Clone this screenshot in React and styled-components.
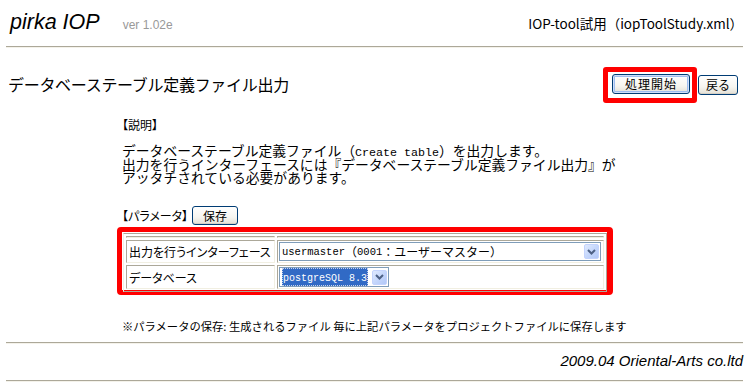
import React from 'react';
import styled, { createGlobalStyle } from 'styled-components';

const GlobalStyle = createGlobalStyle`
  html, body {
    margin: 0;
    padding: 0;
    background: #ffffff;
  }
  body {
    font-family: "Noto Sans CJK JP", "Liberation Sans", sans-serif;
    color: #000;
  }
`;

const Page = styled.div`
  width: 751px;
  box-sizing: border-box;
  padding: 0 8px 0 6px;
`;

const Header = styled.div`
  display: flex;
  justify-content: space-between;
  align-items: baseline;
  height: 46px;
  box-sizing: border-box;
  padding: 12px 0 0 4px;
`;

const Brand = styled.div`
  display: flex;
  align-items: baseline;
  gap: 23px;
`;

const Logo = styled.span`
  font-family: "Liberation Sans", Arial, sans-serif;
  font-style: italic;
  font-size: 21.5px;
  line-height: 21px;
  color: #000;
`;

const Version = styled.span`
  font-family: "Liberation Sans", Arial, sans-serif;
  font-size: 12px;
  color: #999999;
`;

const ProjectName = styled.span`
  font-size: 13.5px;
  color: #000;
`;

const Rule = styled.div`
  height: 0;
  border-top: 1px solid #aca899;
  border-bottom: 1px solid #f4f2ea;
  margin-top: ${(p) => p.$top || 0}px;
`;

const TitleRow = styled.div`
  display: flex;
  justify-content: space-between;
  align-items: center;
  height: 36px;
  margin-top: 19px;
  padding-left: 2px;
`;

const Title = styled.h1`
  margin: 0 0 3px 0;
  font-size: 16px;
  font-weight: normal;
  letter-spacing: -0.3px;
  line-height: 20px;
`;

const ButtonBar = styled.div`
  display: flex;
  align-items: center;
  margin-right: 5px;
`;

const Highlight = styled.div`
  border: 5px solid #ff0000;
  border-radius: 3px;
  padding: 2px 2px 4px 4px;
  display: flex;
`;

const Button = styled.button`
  height: ${(p) => p.$h || 20}px;
  width: ${(p) => p.$w}px;
  margin: 0 0 0 ${(p) => p.$gap || 0}px;
  padding: 0;
  font-family: "Noto Sans CJK JP", sans-serif;
  font-size: 12px;
  line-height: 1;
  letter-spacing: ${(p) => (p.$spaced ? '1px' : '0')};
  color: #000;
  border: 1px solid #003c74;
  border-radius: 3px;
  background: linear-gradient(#ffffff 0%, #f6f5f0 60%, #e3e0d6 100%);
  box-shadow: ${(p) =>
    p.$focus ? 'inset 0 0 0 1px #cfdff9, inset 0 0 0 2px #9ebdf0' : 'inset 0 -1px 0 #d6d0c5'};
`;

const Content = styled.div`
  padding-left: 116px;
`;

const SectionLabel = styled.div`
  font-size: 12px;
  line-height: 14px;
  font-feature-settings: "palt";
  margin-top: ${(p) => p.$top || 0}px;
`;

const Description = styled.div`
  margin-top: 12px;
  font-size: 13.8px;
`;

const DescLine = styled.div`
  height: 13.7px;
  line-height: 13.7px;
  white-space: nowrap;
`;

const Mono = styled.span`
  font-family: "Liberation Mono", monospace;
  font-size: ${(p) => p.$size || 11.67}px;
`;

const ParamRow = styled.div`
  display: flex;
  align-items: center;
  gap: 4px;
  margin-top: 21px;
  height: 19px;
`;

const Frame = styled.div`
  margin-top: 2px;
  margin-left: -5px;
  width: 496px;
  box-sizing: border-box;
  border: 5px solid #ff0000;
  border-right-width: 6px;
  border-radius: 4px;
  padding: 1px 0 0 1px;
  height: 68px;
`;

const Table = styled.table`
  width: 484px;
  border-collapse: separate;
  border-spacing: 2px;
  border: 1px solid;
  border-color: #aca899 #aca899 #aca899 #f1efe2;
`;

const Cell = styled.td`
  border: 1px solid;
  border-color: #aca899 #f1efe2 #f1efe2 #aca899;
  padding: ${(p) => (p.$spacer ? '0' : '1px')};
  height: ${(p) => (p.$spacer ? '0' : 'auto')};
  width: ${(p) => (p.$w ? `${p.$w}px` : 'auto')};
  box-sizing: border-box;
  vertical-align: middle;
`;

const LabelCell = styled(Cell)`
  font-size: 12px;
  font-feature-settings: "palt";
  padding-left: 2px;
  white-space: nowrap;
`;

const SelectBox = styled.div`
  display: flex;
  align-items: center;
  width: ${(p) => p.$w}px;
  height: ${(p) => p.$h}px;
  box-sizing: border-box;
  border: 1px solid #7f9db9;
  background: #ffffff;
  padding: 0 1px 0 2px;
  font-size: 12px;
`;

const SelectText = styled.span`
  flex: 1;
  white-space: nowrap;
  overflow: hidden;
  display: flex;
  align-items: center;
`;

const Selected = styled.span`
  background: #316ac5;
  color: #ffffff;
  padding: 0 1px;
  outline: 1px dotted #c8d4ee;
  outline-offset: -1px;
  line-height: 15px;
`;

const ArrowButton = styled.span`
  width: 15px;
  height: 15px;
  flex: none;
  box-sizing: border-box;
  display: flex;
  align-items: center;
  justify-content: center;
  border: 1px solid #c3d3fd;
  border-radius: 2px;
  background: linear-gradient(135deg, #e0eafe 0%, #c5d7fc 50%, #b2c8f7 100%);
`;

const Note = styled.div`
  margin-top: 24px;
  font-size: 11.3px;
  line-height: 14px;
`;

const Footer = styled.div`
  margin-top: 9px;
  text-align: right;
  font-family: "Liberation Sans", Arial, sans-serif;
  font-style: italic;
  font-size: 15px;
  line-height: 16px;
`;

const Chevron = () => (
  <svg width="9" height="6" viewBox="0 0 9 6">
    <path d="M1 1 L4.5 4.5 L8 1" fill="none" stroke="#4d6185" strokeWidth="2" />
  </svg>
);

const Select = ({ width, height, children }) => (
  <SelectBox $w={width} $h={height}>
    <SelectText>{children}</SelectText>
    <ArrowButton>
      <Chevron />
    </ArrowButton>
  </SelectBox>
);

export default function App() {
  return (
    <>
      <GlobalStyle />
      <Page>
        <Header>
          <Brand>
            <Logo>pirka IOP</Logo>
            <Version>ver 1.02e</Version>
          </Brand>
          <ProjectName>IOP-tool試用（iopToolStudy.xml）</ProjectName>
        </Header>
        <Rule />

        <TitleRow>
          <Title>データベーステーブル定義ファイル出力</Title>
          <ButtonBar>
            <Highlight>
              <Button $w={78} $focus $spaced>
                処理開始
              </Button>
            </Highlight>
            <Button $w={40} $gap={1}>
              戻る
            </Button>
          </ButtonBar>
        </TitleRow>

        <Content>
          <SectionLabel $top={15}>【説明】</SectionLabel>
          <Description>
            <DescLine>
              データベーステーブル定義ファイル（<Mono>Create table</Mono>）を出力します。
            </DescLine>
            <DescLine>出力を行うインターフェースには『データベーステーブル定義ファイル出力』が</DescLine>
            <DescLine>アッタチされている必要があります。</DescLine>
          </Description>

          <ParamRow>
            <SectionLabel>【パラメータ】</SectionLabel>
            <Button $w={46} $h={19}>
              保存
            </Button>
          </ParamRow>

          <Frame>
            <Table>
              <tbody>
                <tr>
                  <Cell $spacer />
                  <Cell $spacer />
                </tr>
                <tr>
                  <LabelCell $w={149}>出力を行うインターフェース</LabelCell>
                  <Cell>
                    <Select width={322} height={19}>
                      <Mono $size={10.5}>usermaster</Mono>（<Mono $size={10.5}>0001</Mono>：ユーザーマスター）
                    </Select>
                  </Cell>
                </tr>
                <tr>
                  <LabelCell $w={149}>データベース</LabelCell>
                  <Cell>
                    <Select width={110} height={20}>
                      <Selected>
                        <Mono $size={10}>postgreSQL 8.3</Mono>
                      </Selected>
                    </Select>
                  </Cell>
                </tr>
              </tbody>
            </Table>
          </Frame>

          <Note>※パラメータの保存: 生成されるファイル 毎に上記パラメータをプロジェクトファイルに保存します</Note>
        </Content>

        <Rule $top={9} />
        <Footer>2009.04 Oriental-Arts co.ltd</Footer>
        <Rule $top={11} />
      </Page>
    </>
  );
}
